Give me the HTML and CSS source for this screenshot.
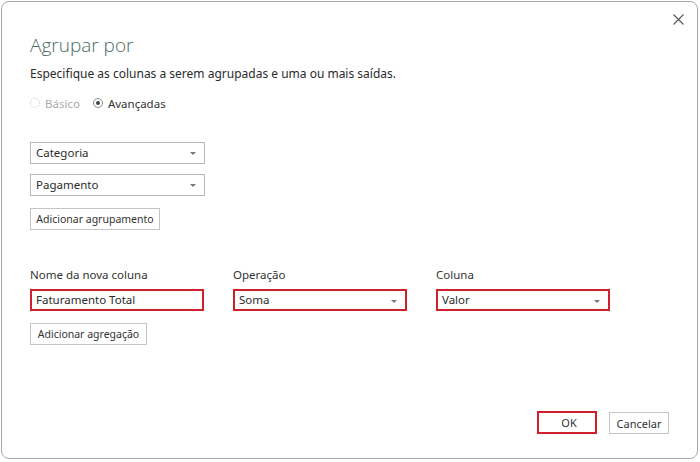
FILE: index.html
```html
<!DOCTYPE html>
<html lang="pt">
<head>
    <meta charset="UTF-8">
    <title>Agrupar por</title>
    <link rel="stylesheet" href="styles.css">
</head>
<body>
    <div class="dialog">
        <button class="close" title="Fechar">
            <svg width="11" height="11" viewBox="0 0 11 11"><path d="M0.5 0.5 L10.5 10.5 M10.5 0.5 L0.5 10.5" stroke="#555" stroke-width="1.1"/></svg>
        </button>

        <h1 class="title">Agrupar por</h1>
        <p class="subtitle">Especifique as colunas a serem agrupadas e uma ou mais saídas.</p>

        <div class="modes">
            <label class="radio disabled"><span class="dot"></span>Básico</label>
            <label class="radio checked"><span class="dot"></span>Avançadas</label>
        </div>

        <div class="groups">
            <div class="select">Categoria<span class="caret"></span></div>
            <div class="select">Pagamento<span class="caret"></span></div>
            <button class="btn">Adicionar agrupamento</button>
        </div>

        <div class="aggregations">
            <div class="field">
                <span class="label">Nome da nova coluna</span>
                <div class="input marked">Faturamento Total</div>
            </div>
            <div class="field">
                <span class="label">Operação</span>
                <div class="select marked">Soma<span class="caret"></span></div>
            </div>
            <div class="field">
                <span class="label">Coluna</span>
                <div class="select marked">Valor<span class="caret"></span></div>
            </div>
        </div>
        <button class="btn add-agg">Adicionar agregação</button>

        <div class="footer">
            <button class="btn ok marked">OK</button>
            <button class="btn">Cancelar</button>
        </div>
    </div>
</body>
</html>
```

FILE: styles.css
```css
body {
    margin: 0;
    background-color: #ffffff;
    font-family: "Noto Sans", "Open Sans", sans-serif;
    font-size: 12px;
    color: #333;
}
.dialog {
    position: relative;
    box-sizing: border-box;
    width: 697px;
    height: 458px;
    margin: 1px 0 0 1px;
    padding: 0 28px;
    background-color: #ffffff;
    border: 1px solid #a9a9a9;
    border-radius: 8px;
    display: flex;
    flex-direction: column;
}
.close {
    position: absolute;
    top: 7px;
    right: 8px;
    width: 22px;
    height: 20px;
    padding: 0;
    border: none;
    background: none;
    display: flex;
    align-items: center;
    justify-content: center;
}
.title {
    margin: 30px 0 0;
    font-family: "Open Sans", sans-serif;
    font-weight: 300;
    font-size: 19px;
    line-height: 26px;
    color: #4d6b63;
}
.subtitle {
    margin: 7px 0 0;
    font-size: 12px;
    line-height: 18px;
    color: #2b2b2b;
}
.modes {
    display: flex;
    gap: 13px;
    margin-top: 11px;
    height: 18px;
    align-items: center;
}
.radio {
    display: flex;
    align-items: center;
    gap: 5px;
    font-size: 11.5px;
    color: #333;
}
.radio .dot {
    box-sizing: border-box;
    width: 10px;
    height: 10px;
    border-radius: 50%;
    border: 1px solid #8a8a8a;
    position: relative;
}
.radio.disabled {
    color: #a9a9a9;
}
.radio.disabled .dot {
    border: 1px dotted #c8c8c8;
}
.radio.checked .dot::after {
    content: "";
    position: absolute;
    top: 2px;
    left: 2px;
    width: 4px;
    height: 4px;
    border-radius: 50%;
    background-color: #444;
}
.groups {
    display: flex;
    flex-direction: column;
    align-items: flex-start;
    gap: 10px;
    margin-top: 30px;
}
.select, .input {
    box-sizing: border-box;
    position: relative;
    width: 175px;
    height: 22px;
    padding: 0 5px;
    border: 1px solid #b8b8b8;
    font-size: 11.5px;
    line-height: 20px;
    color: #2b2b2b;
    background-color: #fff;
}
.caret {
    position: absolute;
    right: 8px;
    top: 9px;
    border-left: 3px solid transparent;
    border-right: 3px solid transparent;
    border-top: 3px solid #777;
}
.btn {
    box-sizing: border-box;
    height: 22px;
    padding: 0;
    border: 1px solid #c4c4c4;
    background-color: #fff;
    font-family: "Noto Sans", "Open Sans", sans-serif;
    font-size: 10.5px;
    white-space: nowrap;
    color: #333;
}
.groups .btn {
    margin-top: 2px;
    width: 130px;
}
.aggregations {
    display: flex;
    gap: 29px;
    margin-top: 37px;
}
.field {
    display: flex;
    flex-direction: column;
    gap: 6px;
}
.field .label {
    font-size: 11.5px;
    line-height: 16px;
    color: #333;
}
.field .select, .field .input {
    width: 174px;
}
.marked {
    border: 2px solid #d0202e;
    padding-left: 4px;
    line-height: 18px;
}
.add-agg {
    align-self: flex-start;
    margin-top: 12px;
    width: 117px;
}
.footer {
    margin-top: auto;
    margin-bottom: 24px;
    display: flex;
    justify-content: flex-end;
    gap: 12px;
}
.footer .btn {
    width: 60px;
    font-size: 11px;
}
.footer .ok {
    height: 23px;
    margin-top: -1px;
}
```
